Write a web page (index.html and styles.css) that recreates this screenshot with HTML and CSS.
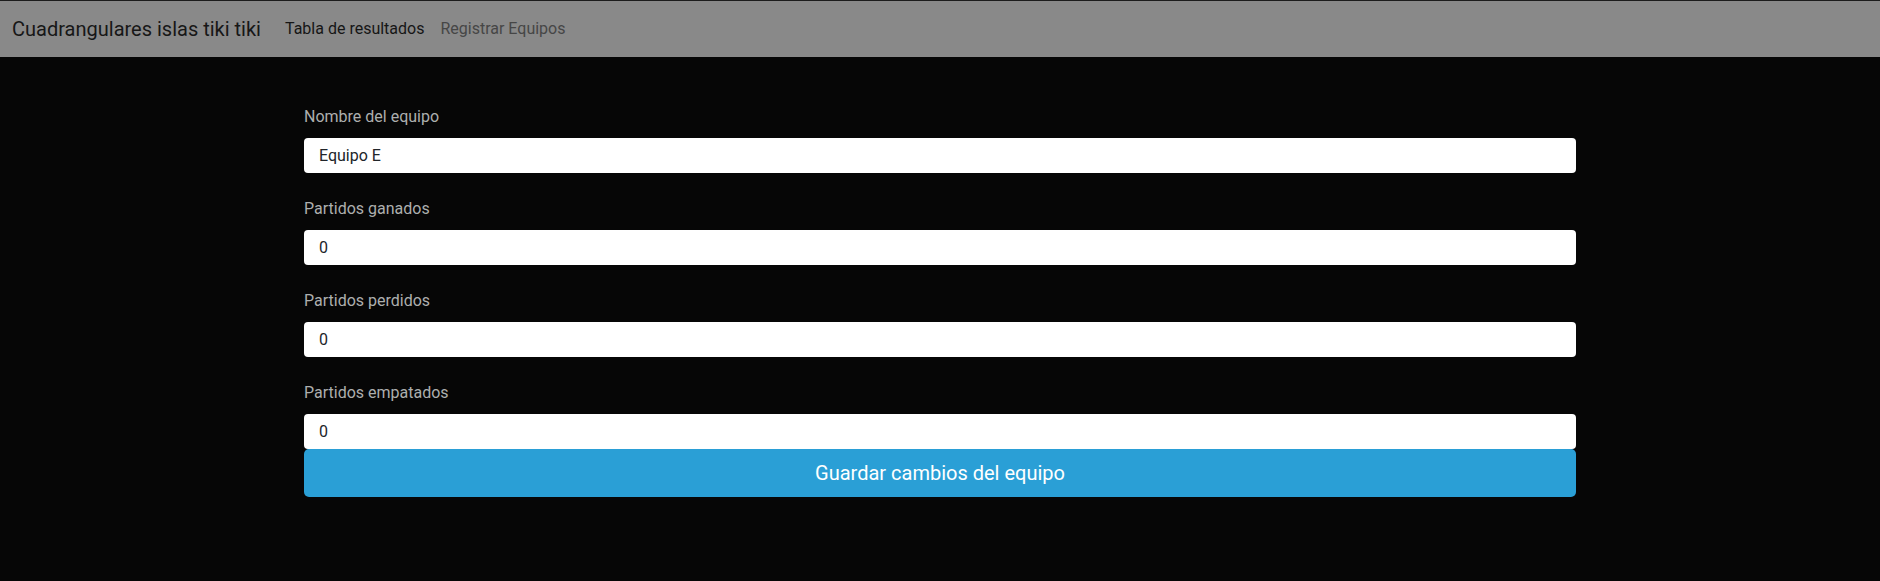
FILE: index.html
```html
<!DOCTYPE html>
<html lang="es">
<head>
<meta charset="utf-8">
<title>Cuadrangulares islas tiki tiki</title>
<link rel="stylesheet" href="styles.css">
</head>
<body>
<nav class="navbar">
  <a class="brand" href="#">Cuadrangulares islas tiki tiki</a>
  <ul class="nav">
    <li><a class="nav-link active" href="#">Tabla de resultados</a></li>
    <li><a class="nav-link" href="#">Registrar Equipos</a></li>
  </ul>
</nav>
<main class="content">
  <form class="team-form">
    <div class="group">
      <label class="label" for="nombre">Nombre del equipo</label>
      <input class="control" id="nombre" type="text" value="Equipo E">
    </div>
    <div class="group">
      <label class="label" for="ganados">Partidos ganados</label>
      <input class="control" id="ganados" type="text" value="0">
    </div>
    <div class="group">
      <label class="label" for="perdidos">Partidos perdidos</label>
      <input class="control" id="perdidos" type="text" value="0">
    </div>
    <div class="group last">
      <label class="label" for="empatados">Partidos empatados</label>
      <input class="control" id="empatados" type="text" value="0">
    </div>
    <button class="btn-primary" type="button">Guardar cambios del equipo</button>
  </form>
</main>
</body>
</html>
```

FILE: styles.css
```css
* { box-sizing: border-box; }

html, body {
  margin: 0;
  padding: 0;
  background: #060606;
  font-family: Roboto, "Liberation Sans", Arial, sans-serif;
  color: #adafae;
}

.navbar {
  display: flex;
  align-items: center;
  height: 57px;
  border-top: 1px solid #1c1c1c;
  background: #898989;
  padding: 0 12px;
}

.brand {
  font-size: 20px;
  line-height: 30px;
  padding: 5px 0;
  margin-right: 16px;
  color: #171717;
  text-decoration: none;
}

.nav {
  display: flex;
  list-style: none;
  margin: 0;
  padding: 0;
}

.nav-link {
  display: block;
  padding: 8px;
  font-size: 16px;
  line-height: 24px;
  color: #464646;
  text-decoration: none;
}

.nav-link.active {
  color: #161616;
}

.content {
  padding-top: 48px;
}

.team-form {
  width: 1272px;
  margin: 0 auto;
}

.group {
  margin-bottom: 24px;
}

.group.last {
  margin-bottom: 0;
}

.label {
  display: block;
  font-size: 16px;
  line-height: 24px;
  margin-bottom: 9px;
  color: #adafae;
}

.control {
  display: block;
  width: 100%;
  height: 35px;
  padding: 0 15px;
  border: 0;
  border-radius: 4px;
  background: #fff;
  color: #212529;
  font-family: Roboto, "Liberation Sans", Arial, sans-serif;
  font-size: 16px;
  line-height: 24px;
  outline: none;
}

.btn-primary {
  display: block;
  width: 100%;
  height: 48px;
  border: 0;
  border-radius: 5px;
  background: #2a9fd6;
  color: #fff;
  font-family: Roboto, "Liberation Sans", Arial, sans-serif;
  font-size: 20px;
  line-height: 30px;
  cursor: pointer;
}
```
